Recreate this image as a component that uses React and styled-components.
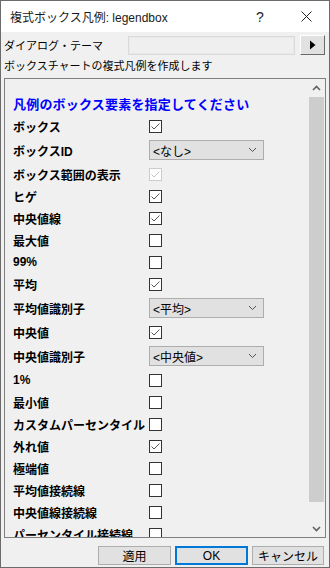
import React from "react"
import styled, { createGlobalStyle } from "styled-components"

const GlobalStyle = createGlobalStyle`
  html, body {
    margin: 0;
    padding: 0;
    background: #ffffff;
  }
  * {
    box-sizing: border-box;
  }
`

const FONT = `"Liberation Sans", "Noto Sans CJK JP", sans-serif`

const Window = styled.div`
  width: 330px;
  height: 568px;
  border: 1px solid #6b6b6b;
  background: #f0f0f0;
  display: flex;
  flex-direction: column;
  font-family: ${FONT};
  color: #000;
  overflow: hidden;
`

const TitleBar = styled.div`
  height: 31px;
  background: #ffffff;
  display: flex;
  align-items: center;
  padding-left: 9px;
  font-size: 12px;
  color: #1a1a1a;
`

const Title = styled.span`
  flex: 1;
`

const TitleControl = styled.span`
  width: 46px;
  display: flex;
  justify-content: center;
  align-items: center;
  font-size: 14px;
  color: #222;
`

const Body = styled.div`
  flex: 1;
  display: flex;
  flex-direction: column;
  padding: 3px 3px 2px 3px;
`

const ThemeRow = styled.div`
  height: 20px;
  display: grid;
  grid-template-columns: 124px 167px 25px;
  align-items: center;
  font-size: 11px;
`

const ThemeInput = styled.div`
  height: 19px;
  border: 1px solid #dadada;
  box-shadow: inset 0 0 0 1px #e9e9e9;
  background: #efefef;
`

const ArrowButton = styled.div`
  margin-left: 5px;
  width: 25px;
  height: 20px;
  background: #e1e1e1;
  border-top: 1px solid #ffffff;
  border-left: 1px solid #ffffff;
  border-right: 1px solid #6a6a6a;
  border-bottom: 1px solid #6a6a6a;
  display: flex;
  align-items: center;
  justify-content: center;
`

const Description = styled.div`
  height: 20px;
  display: flex;
  align-items: center;
  font-size: 11px;
`

const Panel = styled.div`
  margin-top: 3px;
  height: 460px;
  border: 1px solid #7f7f7f;
  display: flex;
  overflow: hidden;
`

const PanelContent = styled.div`
  flex: 1;
  overflow: hidden;
  padding: 12px 0 0 8px;
`

const Heading = styled.div`
  height: 24px;
  display: flex;
  align-items: center;
  font-size: 13px;
  font-weight: bold;
  color: #0000ff;
  letter-spacing: 0.2px;
`

const Row = styled.div`
  height: ${p => (p.$select ? 26 : 22)}px;
  display: grid;
  grid-template-columns: 136px auto;
  align-items: center;
`

const Label = styled.div`
  font-size: 12px;
  font-weight: bold;
  white-space: nowrap;
  overflow: hidden;
`

const Box = styled.div`
  width: 13px;
  height: 13px;
  border: 1px solid ${p => (p.$disabled ? "#cccccc" : "#333333")};
  background: #ffffff;
  display: flex;
  align-items: center;
  justify-content: center;
`

const Select = styled.div`
  width: 115px;
  height: 20px;
  background: #e1e1e1;
  border: 1px solid #adadad;
  display: flex;
  align-items: center;
  justify-content: space-between;
  padding: 0 6px 0 3px;
  font-size: 12px;
`

const ScrollBar = styled.div`
  width: 17px;
  display: flex;
  flex-direction: column;
  background: #f0f0f0;
`

const ScrollArrow = styled.div`
  height: 17px;
  display: flex;
  align-items: center;
  justify-content: center;
`

const ScrollThumb = styled.div`
  margin: 1px 1px 0 1px;
  height: 405px;
  background: #cdcdcd;
`

const ScrollSpace = styled.div`
  flex: 1;
`

const ButtonRow = styled.div`
  margin-top: 8px;
  height: 19px;
  display: flex;
  justify-content: flex-end;
  gap: 4px;
  padding-right: 2px;
`

const Button = styled.div`
  width: ${p => p.$w}px;
  height: 19px;
  background: #e1e1e1;
  border: ${p => (p.$default ? "2px solid #0078d7" : "1px solid #adadad")};
  display: flex;
  align-items: center;
  justify-content: center;
  font-size: 12px;
`

const Check = ({ checked, disabled }) => (
  <Box $disabled={disabled}>
    {checked && (
      <svg width="11" height="11" viewBox="0 0 11 11">
        <polyline
          points="1.5,5.5 4,8 9.5,2.5"
          fill="none"
          stroke={disabled ? "#c4c4c4" : "#555555"}
          strokeWidth="1"
        />
      </svg>
    )}
  </Box>
)

const Chevron = ({ up, color = "#606060", w = 1.6 }) => (
  <svg width="9" height="6" viewBox="0 0 9 6">
    <polyline
      points={up ? "1,5 4.5,1.5 8,5" : "1,1 4.5,4.5 8,1"}
      fill="none"
      stroke={color}
      strokeWidth={w}
    />
  </svg>
)

const rows = [
  { label: "ボックス", checked: true },
  { label: "ボックスID", select: "<なし>" },
  { label: "ボックス範囲の表示", checked: true, disabled: true },
  { label: "ヒゲ", checked: true },
  { label: "中央値線", checked: true },
  { label: "最大値" },
  { label: "99%" },
  { label: "平均", checked: true },
  { label: "平均値識別子", select: "<平均>" },
  { label: "中央値", checked: true },
  { label: "中央値識別子", select: "<中央値>" },
  { label: "1%" },
  { label: "最小値" },
  { label: "カスタムパーセンタイル" },
  { label: "外れ値", checked: true },
  { label: "極端値" },
  { label: "平均値接続線" },
  { label: "中央値線接続線" },
  { label: "パーセンタイル接続線" },
]

export default function App() {
  return (
    <>
      <GlobalStyle />
      <Window>
        <TitleBar>
          <Title>複式ボックス凡例: legendbox</Title>
          <TitleControl>?</TitleControl>
          <TitleControl>
            <svg width="11" height="11" viewBox="0 0 11 11">
              <path d="M0.5 0.5 L10.5 10.5 M10.5 0.5 L0.5 10.5" stroke="#222" strokeWidth="1" />
            </svg>
          </TitleControl>
        </TitleBar>
        <Body>
          <ThemeRow>
            <span>ダイアログ・テーマ</span>
            <ThemeInput />
            <ArrowButton>
              <svg width="7" height="10" viewBox="0 0 7 10">
                <path d="M1 0.5 L6.5 5 L1 9.5 Z" fill="#000" />
              </svg>
            </ArrowButton>
          </ThemeRow>
          <Description>ボックスチャートの複式凡例を作成します</Description>
          <Panel>
            <PanelContent>
              <Heading>凡例のボックス要素を指定してください</Heading>
              {rows.map(r => (
                <Row key={r.label} $select={!!r.select}>
                  <Label>{r.label}</Label>
                  {r.select ? (
                    <Select>
                      <span>{r.select}</span>
                      <Chevron color="#505050" w={1} />
                    </Select>
                  ) : (
                    <Check checked={r.checked} disabled={r.disabled} />
                  )}
                </Row>
              ))}
            </PanelContent>
            <ScrollBar>
              <ScrollArrow>
                <Chevron up />
              </ScrollArrow>
              <ScrollThumb />
              <ScrollSpace />
              <ScrollArrow>
                <Chevron />
              </ScrollArrow>
            </ScrollBar>
          </Panel>
          <ButtonRow>
            <Button $w={73}>適用</Button>
            <Button $w={73} $default>OK</Button>
            <Button $w={72}>キャンセル</Button>
          </ButtonRow>
        </Body>
      </Window>
    </>
  )
}
